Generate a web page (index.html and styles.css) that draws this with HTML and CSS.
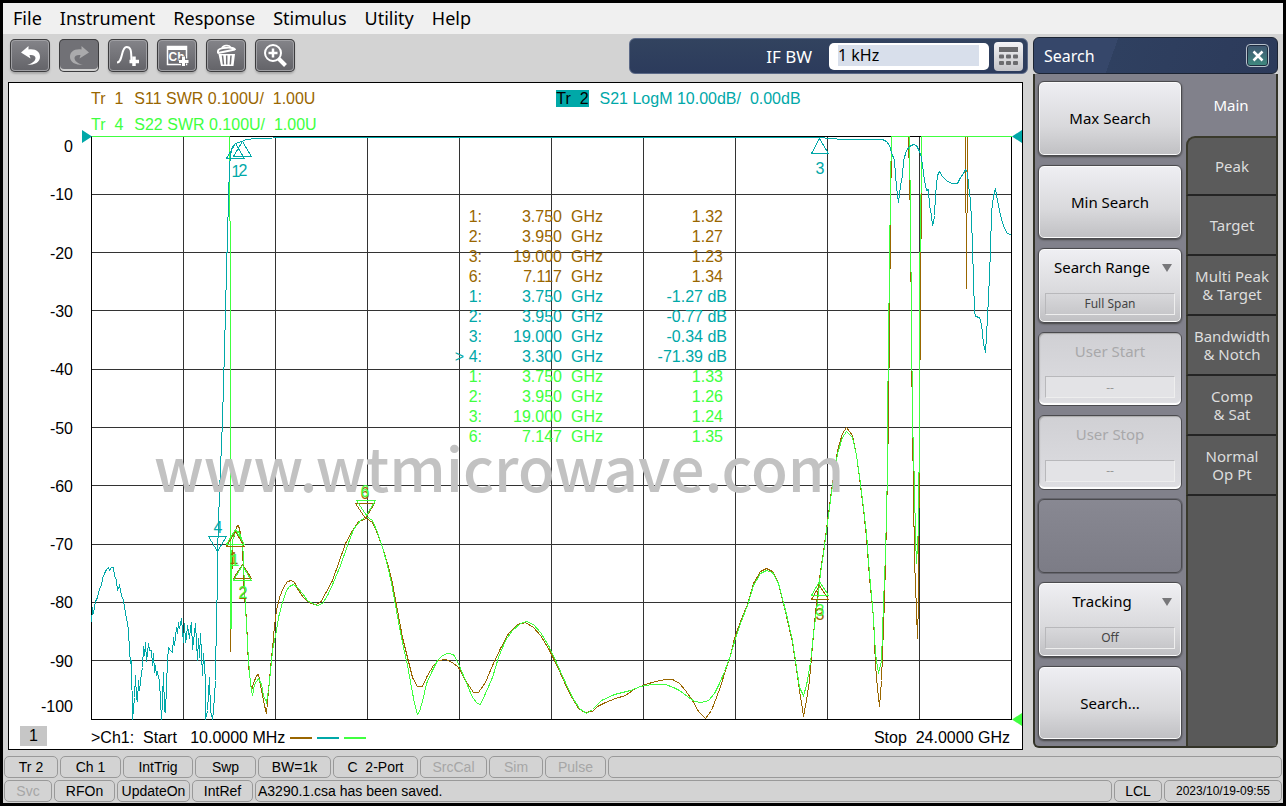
FILE: index.html
```html
<!DOCTYPE html>
<html lang="en">
<head>
  <meta charset="UTF-8">
  <title>Network Analyzer</title>
  <link rel="stylesheet" href="styles.css">
</head>
<body>
  <div class="app">
    <nav class="menu">
      <button>File</button>
      <button>Instrument</button>
      <button>Response</button>
      <button>Stimulus</button>
      <button>Utility</button>
      <button>Help</button>
    </nav>

    <div class="main">
      <div class="work">
        <div class="toolbar">
          <button class="tool" aria-label="Undo">
            <svg width="40" height="33" viewBox="0 0 40 33"><path d="M11 13.5 L18.500 7 L18.500 10.500 C26 9.500 30 13 30 18 C30 23 25 26 17 26 C22 24.500 25.500 22 25.500 19 C25.500 16.500 22.500 15.500 19.500 16 L20.500 19.500 Z" fill="#fff"/></svg>
          </button>
          <button class="tool off" aria-label="Redo" disabled>
            <svg width="40" height="33" viewBox="0 0 40 33"><path d="M30 13.500 L22.500 7 L22.500 10.500 C15 9.500 11 13 11 18 C11 23 16 26 24 26 C19 24.500 15.500 22 15.500 19 C15.500 16.500 18.500 15.500 21.500 16 L20.500 19.500 Z" fill="#aaaaac"/></svg>
          </button>
          <button class="tool" aria-label="Add trace">
            <svg width="40" height="33" viewBox="0 0 40 33"><path d="M9 23.500 C15 23.500 13 8 18.500 8 C24 8 23 14 23.500 22" fill="none" stroke="#fff" stroke-width="2"/><path d="M26 17.500V27M21.500 22.500H31" stroke="#fff" stroke-width="3.500"/></svg>
          </button>
          <button class="tool" aria-label="Add channel">
            <svg width="40" height="33" viewBox="0 0 40 33"><path d="M10.500 7.500H29.500V25.500H10.500Z" fill="none" stroke="#fff" stroke-width="1.500"/><path d="M10 7H30V11H10Z" fill="#fff"/><text x="11.500" y="22" class="ch">Ch</text><path d="M26.500 17V27M21.500 22H31.500" stroke="#717175" stroke-width="5"/><path d="M26.500 17.500V27M22 22.500H31.500" stroke="#fff" stroke-width="3"/></svg>
          </button>
          <button class="tool" aria-label="Delete">
            <svg width="40" height="33" viewBox="0 0 40 33"><path d="M12 14.500V12C12 8.500 29 7 29 11" fill="none" stroke="#fff" stroke-width="2"/><path d="M16 9C17 6 23 5.500 24.500 8" fill="none" stroke="#fff" stroke-width="1.500"/><path d="M12 14 L29 10.500" stroke="#fff" stroke-width="2"/><path d="M12.500 15H29L27.500 27H15Z" fill="#fff"/><path d="M16.500 16.500L17.500 25.500M20.700 16.500V25.500M25 16.500L24.300 25.500" stroke="#717175" stroke-width="1.500"/></svg>
          </button>
          <button class="tool" aria-label="Zoom">
            <svg width="40" height="33" viewBox="0 0 40 33"><circle cx="18" cy="14" r="8" fill="none" stroke="#fff" stroke-width="2"/><path d="M18 9.500V18.500M13.500 14H22.500" stroke="#fff" stroke-width="2.500"/><path d="M23.500 19.500L30.500 26.500" stroke="#fff" stroke-width="4"/></svg>
          </button>
          <div class="entry">
            <label for="ifbw">IF BW</label>
            <span class="field"><input id="ifbw" type="text" value="1 kHz"></span>
            <button class="keypad" aria-label="Keypad">
              <svg width="29" height="29" viewBox="0 0 29 29" fill="#6b6b6e"><path d="M5 5H24V10H5Z"/><rect x="5" y="12.500" width="5" height="4" rx="1"/><rect x="12" y="12.500" width="5" height="4" rx="1"/><rect x="19" y="12.500" width="5" height="4" rx="1"/><rect x="5" y="19" width="5" height="4" rx="1"/><rect x="12" y="19" width="5" height="4" rx="1"/><rect x="19" y="19" width="5" height="4" rx="1"/></svg>
            </button>
          </div>
        </div>

        <div class="chart">
          <div class="traces">
            <span class="brown"><b>Tr  1</b>S11 SWR 0.100U/  1.00U</span>
            <span class="teal"><b class="active">Tr  2</b>S21 LogM 10.00dB/  0.00dB</span>
            <span class="green"><b>Tr  4</b>S22 SWR 0.100U/  1.00U</span>
          </div>

          <div class="plot">
            <svg viewBox="9 135 1013 589">
              <g class="grid">
                <path d="M183 136V719M275 136V719M367 136V719M459 136V719M551 136V719M643 136V719M735 136V719M827 136V719M919 136V719"/>
                <path d="M91 194H1011M91 252H1011M91 310H1011M91 369H1011M91 427H1011M91 485H1011M91 544H1011M91 602H1011M91 660H1011"/>
                <path class="frame" d="M91 136H1011V719H91Z"/>
              </g>

              <g class="axis">
                <text x="73" y="152">0</text>
                <text x="73" y="200">-10</text>
                <text x="73" y="259">-20</text>
                <text x="73" y="317">-30</text>
                <text x="73" y="375">-40</text>
                <text x="73" y="434">-50</text>
                <text x="73" y="492">-60</text>
                <text x="73" y="550">-70</text>
                <text x="73" y="608">-80</text>
                <text x="73" y="667">-90</text>
                <text x="73" y="712">-100</text>
              </g>

              <!-- S11 -->
              <g class="trace s-brown">
                <polyline points="91,136 229,136 230,300 230,651 231,600 232,540 234,535 236,526 238,525 240,533 242,545 243,575 244,595 246,620 248,665 251,690 253,683 256,675 258,674 261,690 264,705 266,713 268,690 270,668 272,648 274,625 276,610 279,597 283,587 287,581 291,580 294,582 298,590 303,597 310,603 315,604 320,602 325,593 332,580 338,563 345,543 352,530 358,521 366,518 372,522 377,533 382,547 387,563 392,583 397,610 402,637 407,657 412,677 417,686 422,686 427,675 433,665 438,660 445,659 452,662 458,667 465,680 473,692 478,692 485,682 492,665 500,648 508,633 517,624 525,622 533,627 540,635 548,648 556,664 564,682 572,698 578,708 584,712 592,711 597,706 605,702 615,698 625,695 635,688 645,684 655,681 665,679 672,679 679,683 685,690 692,700 698,711 705,718 711,710 716,697 720,686 725,670 730,655 734,638 740,621 747,604 753,583 760,571 766,568 772,571 778,583 783,603 787,620 792,642 795,662 799,690 801,702 803,716 806,700 809,680 812,645 816,602 820,571 823,551 827,521 831,490 837,450 842,433 846,427 852,435 856,455 860,485 863,509 866,537 869,577 873,617 875,665 877,688 879,706 881,680 884,600 886,520 888,420 890,220 891,136 908,136 910,220 911,340 912,430 913,490 914,560 916,610 917,638 918,600 919,420 920,300 921,180 921,136 965,136"/>
                <path d="M965 136V212M967 136V212M966 212V288"/>
              </g>

              <!-- S22 -->
              <g class="trace s-green">
                <polyline points="91,136 229,136 230,300 230,628 231,628 231,560 232,540 235,530 238,531 240,535 242,541 243,560 244,588 246,625 248,660 250,683 252,695 254,684 258,678 261,684 263,695 266,702 268,690 270,671 272,650 274,640 276,630 278,617 282,602 286,590 289,586 293,584 297,587 302,593 307,600 312,603 317,605 322,603 327,595 333,582 340,565 347,545 353,529 360,520 366,516 372,520 377,532 382,547 387,565 391,583 395,605 399,627 403,647 407,665 411,687 414,703 417,714 419,711 423,697 426,683 432,670 437,660 442,655 447,653 453,654 458,663 465,680 472,697 477,703 480,704 485,693 492,677 498,657 505,640 512,630 520,623 526,621 533,624 540,632 548,645 556,662 564,680 572,697 579,708 586,713 592,709 601,700 614,694 630,690 640,686 652,684 665,684 673,687 679,690 687,696 694,701 701,702 708,700 714,693 719,683 724,671 730,655 735,638 740,623 747,605 753,585 760,573 766,570 772,572 778,583 783,602 787,618 792,640 795,660 799,687 803,695 806,685 810,662 813,633 817,602 820,573 823,553 827,523 831,492 837,453 842,437 846,431 852,437 856,455 860,483 863,507 866,533 869,573 873,617 875,653 878,673 881,660 883,603 885,553 887,470 887,420 890,187 891,136 909,136 910,220 912,420 914,487 915,537 916,563 918,527 919,420 919,283 921,165 921,136 1011,136"/>
              </g>

              <!-- S21 -->
              <g class="trace s-teal">
                <polyline points="91,622 92,607 93,613 95,601 97,597 99,588 101,585 102,578 104,573 106,569 108,567 109,570 111,567 113,567 114,575 116,580 117,590 119,585 121,595 123,600 125,613 127,623 128,630 129,650 130,663 131,660 132,719 134,697 135,675 136,698 137,701 138,680 139,690 141,672 142,667 143,646 144,655 145,642 146,661 148,643 149,650 151,650 152,665 153,653 154,672 155,665 156,675 157,672 159,681 161,719 162,700 163,672 164,710 165,712 167,660 168,647 170,650 172,652 173,637 174,645 176,627 177,633 178,622 179,628 181,618 183,642 184,623 185,642 186,637 187,625 189,638 190,628 191,622 192,649 194,633 195,623 197,660 198,638 199,657 200,633 202,675 203,653 205,680 205,719 207,710 209,677 210,710 212,719 213,710 215,680 216,613 217,587 217,553 218,523 219,492 221,444 222,420 224,350 226,270 228,200 229,165 231,148 235,143 241,141 246,139 255,138 290,137 819,137 842,139 882,139 886,141 889,145 891,152 894,160 895,175 897,195 898,202 900,185 902,175 903,160 906,150 909,146 913,144 916,145 919,151 921,157 922,165 924,180 926,190 928,189 929,205 931,215 932,225 933,222 934,215 935,195 937,175 939,171 942,176 946,180 951,183 957,183 960,177 963,173 965,169 967,172 968,185 970,200 971,220 972,245 973,280 974,310 975,316 979,317 981,324 983,343 985,352 986,335 988,298 990,250 991,212 993,196 995,188 997,200 1000,215 1003,225 1006,232 1011,235"/>
              </g>

              <!-- markers -->
              <g class="trace s-brown">
                <path d="M235 531L226 546H244ZM242 564L233 578H251ZM819 585L811 599H828ZM355 503H374L365 518Z"/>
              </g>
              <g class="mark brown">
                <text x="234" y="564">1</text>
                <text x="243" y="599">2</text>
                <text x="820" y="620">3</text>
                <text x="365" y="499">6</text>
              </g>
              <g class="trace s-green">
                <path d="M235 529L226 544H244ZM242 565L233 580H251ZM819 581L811 595H828ZM356 500H375L366 515Z"/>
              </g>
              <g class="mark green">
                <text x="235" y="566">1</text>
                <text x="243" y="598">2</text>
                <text x="820" y="616">3</text>
                <text x="365" y="497">6</text>
              </g>
              <g class="trace s-teal">
                <path d="M235 143L226 158H244ZM242 141L233 156H251ZM819 138L811 153H828ZM208 536H226L217 551Z"/>
              </g>
              <g class="mark teal">
                <text x="236" y="177">1</text>
                <text x="243" y="176">2</text>
                <text x="820" y="174">3</text>
                <text x="218" y="533">4</text>
              </g>

              <!-- reference levels -->
              <path class="f-teal" d="M82 130L92 136.500L82 143ZM1022 130L1012 136.500L1022 143Z"/>
              <path class="f-green" d="M1022 713L1012 719.500L1022 726Z"/>
            </svg>

            <div class="watermark">www.wtmicrowave.com</div>

            <table class="readout">
              <tbody class="brown">
                <tr><td>1:</td><td>3.750</td><td>GHz</td><td>1.32</td></tr>
                <tr><td>2:</td><td>3.950</td><td>GHz</td><td>1.27</td></tr>
                <tr><td>3:</td><td>19.000</td><td>GHz</td><td>1.23</td></tr>
                <tr><td>6:</td><td>7.117</td><td>GHz</td><td>1.34</td></tr>
              </tbody>
              <tbody class="teal db">
                <tr><td>1:</td><td>3.750</td><td>GHz</td><td>-1.27 dB</td></tr>
                <tr><td>2:</td><td>3.950</td><td>GHz</td><td>-0.77 dB</td></tr>
                <tr><td>3:</td><td>19.000</td><td>GHz</td><td>-0.34 dB</td></tr>
                <tr><td>&gt; 4:</td><td>3.300</td><td>GHz</td><td>-71.39 dB</td></tr>
              </tbody>
              <tbody class="green">
                <tr><td>1:</td><td>3.750</td><td>GHz</td><td>1.33</td></tr>
                <tr><td>2:</td><td>3.950</td><td>GHz</td><td>1.26</td></tr>
                <tr><td>3:</td><td>19.000</td><td>GHz</td><td>1.24</td></tr>
                <tr><td>6:</td><td>7.147</td><td>GHz</td><td>1.35</td></tr>
              </tbody>
            </table>
          </div>

          <div class="sweep">
            <span class="window">1</span>
            <span class="start">&gt;Ch1:  Start   10.0000 MHz</span>
            <i class="key b-brown"></i>
            <i class="key b-teal"></i>
            <i class="key b-green"></i>
            <span class="stop">Stop  24.0000 GHz</span>
          </div>
        </div>
      </div>

      <aside class="panel">
        <header>
          <h2>Search</h2>
          <button class="close" aria-label="Close">
            <svg width="12" height="12" viewBox="0 0 12 12"><path d="M1.500 1.500L10.500 10.500M10.500 1.500L1.500 10.500" stroke="#fff" stroke-width="2.500"/></svg>
          </button>
        </header>
        <div class="body">
          <div class="keys">
            <button class="key-btn">Max Search</button>
            <button class="key-btn">Min Search</button>
            <div class="key-btn drop">
              <label for="range">Search Range</label>
              <select id="range"><option>Full Span</option></select>
            </div>
            <div class="key-btn disabled">
              <label for="ustart">User Start</label>
              <input id="ustart" type="text" value="--" disabled>
            </div>
            <div class="key-btn disabled">
              <label for="ustop">User Stop</label>
              <input id="ustop" type="text" value="--" disabled>
            </div>
            <div class="key-btn empty"></div>
            <div class="key-btn drop">
              <label for="tracking">Tracking</label>
              <select id="tracking"><option>Off</option></select>
            </div>
            <button class="key-btn">Search...</button>
          </div>
          <div class="tabs">
            <button class="current">Main</button>
            <button class="first">Peak</button>
            <button>Target</button>
            <button>Multi Peak<br>&amp; Target</button>
            <button>Bandwidth<br>&amp; Notch</button>
            <button>Comp<br>&amp; Sat</button>
            <button>Normal<br>Op Pt</button>
            <div class="rest"></div>
          </div>
        </div>
      </aside>
    </div>

    <footer class="status">
      <div class="row">
        <span class="w54">Tr 2</span>
        <span class="w61">Ch 1</span>
        <span class="w70">IntTrig</span>
        <span class="w61">Swp</span>
        <span class="w73">BW=1k</span>
        <span class="w85">C  2-Port</span>
        <span class="w67 dim">SrcCal</span>
        <span class="w54 dim">Sim</span>
        <span class="w61 dim">Pulse</span>
        <span class="fill"></span>
      </div>
      <div class="row">
        <span class="w48 dim">Svc</span>
        <span class="w61">RFOn</span>
        <span class="w73">UpdateOn</span>
        <span class="w61">IntRef</span>
        <span class="fill">A3290.1.csa has been saved.</span>
        <span class="w48">LCL</span>
        <span class="w118">2023/10/19-09:55</span>
      </div>
    </footer>
  </div>
</body>
</html>
```
FILE: styles.css
```css
* {
  box-sizing: border-box;
}
body {
  margin: 0;
  padding: 3px;
  background: #000;
  font-family: "Noto Sans", sans-serif;
  font-size: 16px;
}
button, input, select {
  font: inherit;
  color: inherit;
  margin: 0;
  padding: 0;
  border: none;
  background: none;
}
.app {
  background: #d3d3d3;
}

/* menu */
.menu {
  display: flex;
  gap: 18px;
  height: 31px;
  padding: 0 0 2px 10px;
  background: #f0f0f0;
  font-size: 18px;
}

.main {
  display: flex;
  gap: 5px;
  padding: 3px 5px 0 5px;
}
.work {
  flex: 1;
  min-width: 0;
}

/* toolbar */
.toolbar {
  display: flex;
  align-items: center;
  gap: 9px;
  height: 38px;
  padding-left: 2px;
}
.tool {
  width: 40px;
  height: 33px;
  margin-bottom: 2px;
  border-radius: 5px;
  background: linear-gradient(#85858a, #626267);
  box-shadow: inset 0 0 0 1px #3c3c3e, inset 0 0 0 2px #a0a0a4, 0 2px 2px #aaa;
}
.tool.off {
  background: #717176;
  box-shadow: inset 0 0 0 1px #3c3c3e, inset 0 -2px 0 1px #d0d0d0;
}
.tool svg, .keypad svg {
  display: block;
}
.ch {
  font: bold 12px "Liberation Sans", sans-serif;
  fill: #fff;
}
.entry {
  display: flex;
  align-items: center;
  justify-content: flex-end;
  gap: 5px;
  width: 399px;
  height: 36px;
  margin-left: auto;
  padding-right: 4px;
  border: 1px solid #5b6987;
  border-radius: 6px;
  background: linear-gradient(#32435f, #2c3b5c);
  color: #fff;
}
.entry label {
  margin-right: 12px;
  font-size: 17px;
}
.field {
  width: 160px;
  height: 27px;
  padding: 2px 10px 4px 9px;
  border-radius: 5px;
  background: #fff;
}
.field input {
  display: block;
  width: 100%;
  height: 21px;
  background: #d8dfeb;
  color: #000;
}
.keypad {
  width: 29px;
  height: 29px;
  border-radius: 4px;
  background: linear-gradient(#f4f4f6, #c4c4c8);
}

/* chart */
.chart {
  margin: 7px 5px 0 0;
  border: 1px solid #000;
  background: #fff;
  font-family: "Liberation Sans", Arial, sans-serif;
}
.traces {
  display: grid;
  grid-template-columns: 46% 1fr;
  row-gap: 6px;
  padding: 6px 0 0 82px;
  line-height: 20px;
  white-space: pre;
}
.traces .teal {
  padding-left: 37px;
}
.traces b {
  margin-right: 11px;
  font-weight: normal;
}
.traces .active {
  background: #00a8a8;
  color: #000;
}
.brown {
  color: #996600;
  fill: #996600;
}
.teal {
  color: #00a8a8;
  fill: #00a8a8;
}
.green {
  color: #40ff40;
  fill: #40ff40;
}
.plot {
  position: relative;
}
.plot svg {
  display: block;
  width: 100%;
  overflow: visible;
}
.grid path, .trace path, .trace polyline {
  fill: none;
  stroke-width: 1;
  shape-rendering: crispEdges;
  transform: translate(0.5px, 0.5px);
}
.grid path {
  stroke: #333;
}
.grid .frame {
  stroke: #000;
}
.s-brown path, .s-brown polyline {
  stroke: #996600;
}
.s-green path, .s-green polyline {
  stroke: #40ff40;
}
.s-teal path, .s-teal polyline {
  stroke: #00a8a8;
}
.f-teal {
  fill: #00a8a8;
}
.f-green {
  fill: #40ff40;
}
.axis text {
  text-anchor: end;
  font-size: 16px;
}
.mark text {
  text-anchor: middle;
  font-size: 16px;
}
.watermark {
  position: absolute;
  left: 145px;
  top: 311px;
  color: #c2c2c2;
  font-family: "Noto Sans CJK SC", sans-serif;
  font-size: 60px;
  font-weight: 500;
  line-height: 40px;
}
.readout {
  position: absolute;
  left: 440px;
  top: 72px;
  border-collapse: collapse;
  line-height: 20px;
  text-align: right;
}
.readout td {
  padding: 0;
  width: 80px;
}
.readout td:first-child {
  width: 33px;
}
.readout td:nth-child(3) {
  width: 41px;
}
.readout td:last-child {
  width: 124px;
  padding-right: 4px;
}
.readout .db td:last-child {
  padding-right: 0;
}
.sweep {
  display: flex;
  align-items: center;
  gap: 5px;
  height: 25px;
  padding: 2px 12px 0 11px;
  white-space: pre;
}
.window {
  align-self: flex-start;
  width: 27px;
  margin-right: 39px;
  background: #c6c6c6;
  line-height: 20px;
  text-align: center;
}
.key {
  width: 22px;
  height: 2px;
}
.b-brown {
  background: #996600;
}
.b-teal {
  background: #00a8a8;
}
.b-green {
  background: #40ff40;
}
.stop {
  margin-left: auto;
}

/* search panel */
.panel {
  display: flex;
  flex-direction: column;
  width: 245px;
  margin-bottom: 2px;
  border-radius: 6px;
  font-size: 15px;
}
.panel header {
  display: flex;
  align-items: center;
  justify-content: space-between;
  height: 37px;
  padding: 0 8px 0 10px;
  border: 1px solid #1c2433;
  border-radius: 6px;
  background: linear-gradient(110deg, #36476a 33%, #2f4060 33%, #2c3a5a);
  color: #fff;
}
.panel h2 {
  margin: 0;
  font-size: 16px;
  font-weight: normal;
}
.close {
  display: flex;
  align-items: center;
  justify-content: center;
  width: 23px;
  height: 23px;
  border: 1px solid #b8c2cc;
  border-radius: 4px;
  background: linear-gradient(#3f5570, #3f8a80);
  box-shadow: inset 0 0 0 1px #1f2c40;
}
.body {
  flex: 1;
  display: flex;
  border: 2px solid #333328;
  border-top: none;
  border-radius: 0 0 6px 6px;
  background: #81818b;
}
.keys {
  display: grid;
  grid-template-rows: repeat(8, 1fr);
  gap: 9px;
  width: 151px;
  padding: 7px 4px 6px 3px;
}
.key-btn {
  display: flex;
  flex-direction: column;
  align-items: center;
  justify-content: center;
  border: 1px solid #4a4a4e;
  border-radius: 6px;
  background: linear-gradient(#efeff3, #d9d9dc 60%, #c0c0c3);
  box-shadow: inset 0 0 0 1px #fafafa, 0 1px 2px #444;
  color: #000;
}
.drop, .disabled {
  position: relative;
  justify-content: space-between;
  padding: 8px 6px 7px;
}
.drop label {
  padding-right: 16px;
}
.drop::after {
  content: "";
  position: absolute;
  top: 15px;
  right: 9px;
  border: 5px solid transparent;
  border-top: 8px solid #77777a;
  border-bottom: none;
}
.drop select, .disabled input {
  appearance: none;
  width: 100%;
  height: 22px;
  border: 1px solid #b8b8bb;
  border-right-color: #eee;
  border-bottom-color: #eee;
  color: #444;
  font-size: 12px;
  text-align: center;
  text-align-last: center;
}
.disabled {
  background: linear-gradient(#d0d0d4, #dedee2);
  box-shadow: inset 0 -2px 1px #fff, inset 1px 1px 1px #aaa;
  color: #a8a8aa;
}
.disabled input {
  background: #e3e3e6;
  color: #999;
}
.empty {
  background: linear-gradient(#888892, #7c7c86);
  box-shadow: 0 0 0 1px #66666e;
}
.tabs {
  flex: 1;
  display: flex;
  flex-direction: column;
  color: #ddd;
}
.tabs button {
  height: 60px;
  border-left: 2px solid #3a3a2c;
  border-bottom: 2px solid #242424;
  background: #5b5b5b;
  line-height: 18px;
  white-space: nowrap;
}
.tabs .current {
  height: 62px;
  border: none;
  background: none;
  color: #fff;
}
.tabs .first {
  border-top: 2px solid #3a3a2c;
  border-top-left-radius: 9px;
}
.rest {
  flex: 1;
  border-left: 2px solid #3a3a2c;
  background: #595959;
}

/* status bar */
.status {
  display: grid;
  gap: 2px;
  padding: 6px 1px 1px;
  font-family: "Liberation Sans", Arial, sans-serif;
  font-size: 14px;
}
.row {
  display: flex;
  gap: 2px;
}
.row span {
  height: 22px;
  border: 1px solid #999;
  border-radius: 5px;
  line-height: 20px;
  text-align: center;
  white-space: pre;
}
.row .fill {
  flex: 1;
  padding-left: 2px;
  text-align: left;
}
.row .dim {
  color: #a6a6a6;
}
.w48 {
  width: 48px;
}
.w54 {
  width: 54px;
}
.w61 {
  width: 61px;
}
.w67 {
  width: 67px;
}
.w70 {
  width: 70px;
}
.w73 {
  width: 73px;
}
.w85 {
  width: 85px;
}
.row .w118 {
  width: 118px;
  font-size: 12px;
}
```
